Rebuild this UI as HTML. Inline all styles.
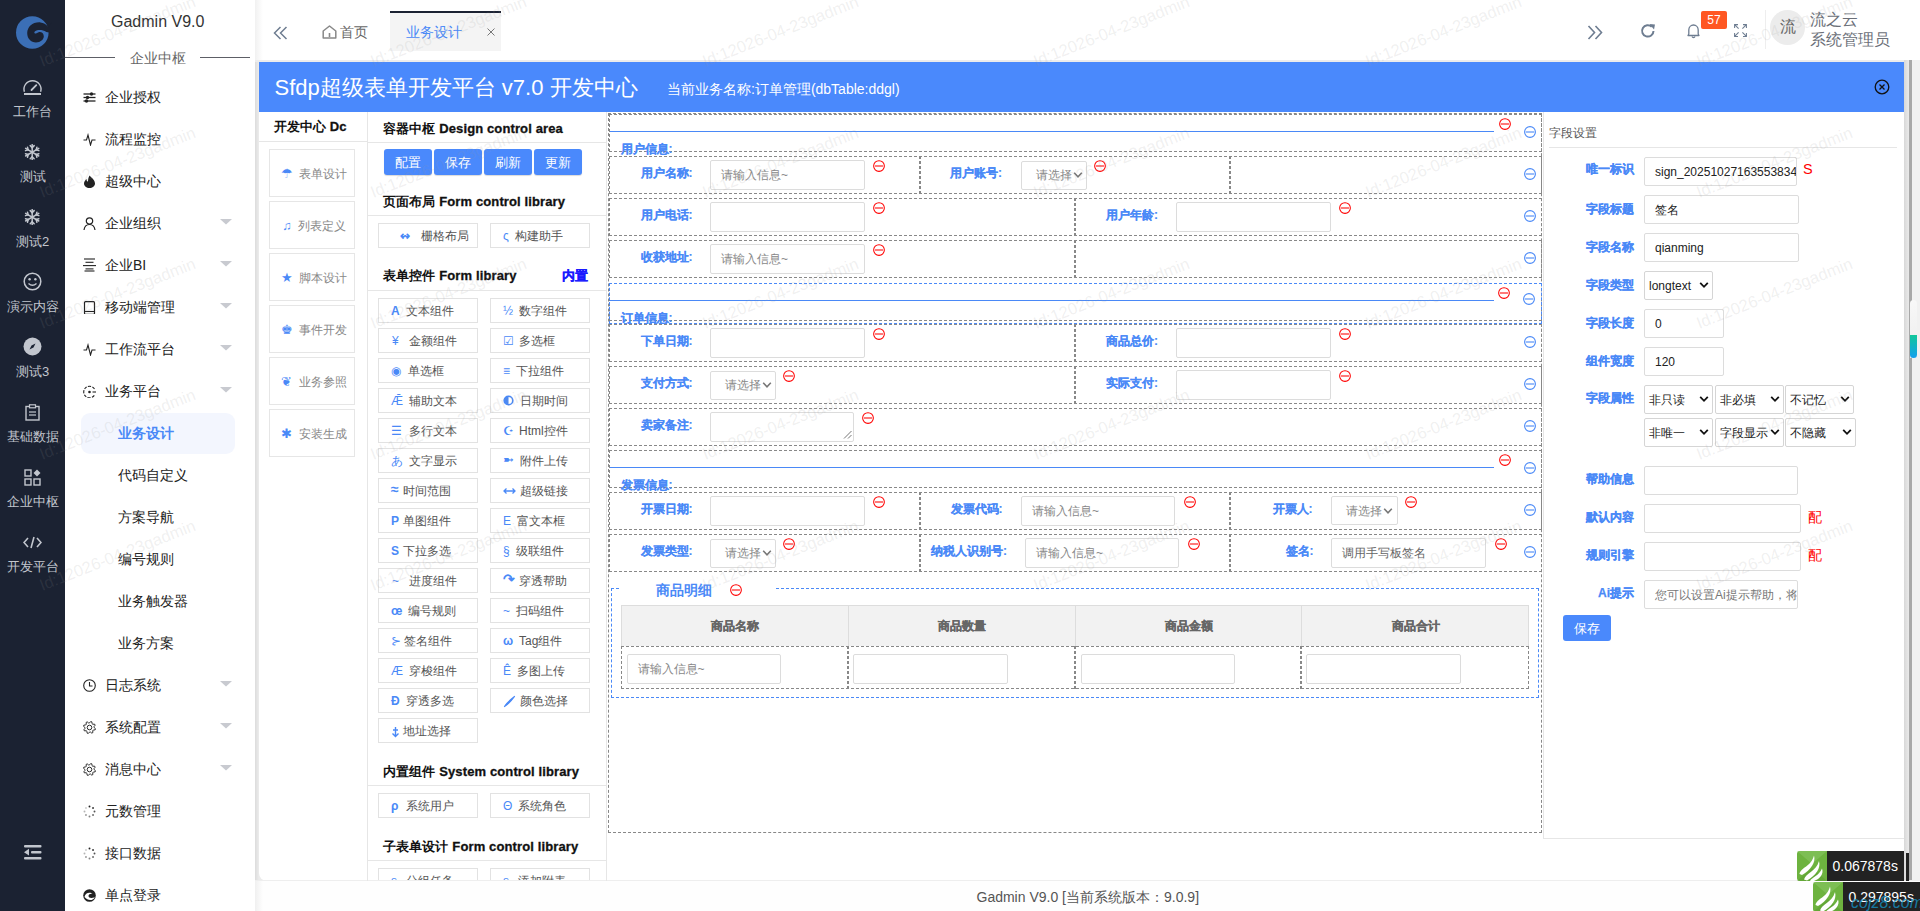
<!DOCTYPE html>
<html><head><meta charset="utf-8">
<style>
*{box-sizing:border-box;margin:0;padding:0}
html,body{width:1920px;height:911px;overflow:hidden;background:#fff;font-family:"Liberation Sans",sans-serif;color:#333}
.a{position:absolute}
.t{white-space:nowrap}
.bx{-webkit-text-stroke:0.25px currentColor}
.cb{position:absolute;width:100px;height:25px;border:1px solid #e2e2e2;background:#fff;font-size:12px;line-height:12px;color:#555;white-space:nowrap}
.cb i{font-style:normal;color:#4a89f7;position:absolute;top:6px}
.cb b{font-weight:normal;position:absolute;top:6px}
.inp{position:absolute;border:1px solid #dcdcdc;border-radius:2px;background:#fff}
.dh{position:absolute;border:1px dashed #888}
.vs{position:absolute;width:2px;border-left:1px dashed #888;border-right:1px dashed #888}
</style></head><body>

<div class="a" style="left:0px;top:0px;width:65px;height:911px;background:#1b2232"></div>
<svg class="a" style="left:0px;top:0px;" width="65" height="60" viewBox="0 0 65 60"><circle cx="32.3" cy="32.5" r="16.3" fill="#3b6fb6"/>
<path d="M48.6 27.2 C46 24 43.5 22.6 40.5 22.4 C33 21.8 27.4 26.5 27.2 33 C27.2 38.8 31 42.4 36 42.4 C40.5 42.4 43.8 39.5 43.8 36.2 C43.8 33.2 41.2 31.6 38.6 32.2 C37 32.6 36.4 33.8 35.2 33.6 C34.2 33.4 34 32 35 31.2 C37.5 29.6 42.5 29.5 46.3 32 L52 33 L52 22 Z" fill="#1b2232"/></svg>
<div class="a t" style="left:0;top:105px;width:65px;text-align:center;font-size:13px;line-height:13px;color:#c2c6ce">工作台</div>
<div class="a t" style="left:0;top:170px;width:65px;text-align:center;font-size:13px;line-height:13px;color:#c2c6ce">测试</div>
<div class="a t" style="left:0;top:235px;width:65px;text-align:center;font-size:13px;line-height:13px;color:#c2c6ce">测试2</div>
<div class="a t" style="left:0;top:300px;width:65px;text-align:center;font-size:13px;line-height:13px;color:#c2c6ce">演示内容</div>
<div class="a t" style="left:0;top:365px;width:65px;text-align:center;font-size:13px;line-height:13px;color:#c2c6ce">测试3</div>
<div class="a t" style="left:0;top:430px;width:65px;text-align:center;font-size:13px;line-height:13px;color:#c2c6ce">基础数据</div>
<div class="a t" style="left:0;top:495px;width:65px;text-align:center;font-size:13px;line-height:13px;color:#c2c6ce">企业中枢</div>
<div class="a t" style="left:0;top:560px;width:65px;text-align:center;font-size:13px;line-height:13px;color:#c2c6ce">开发平台</div>
<svg class="a" style="left:22px;top:78px;" width="21" height="19" viewBox="0 0 21 19"><path d="M2.38 13.7 A8.5 8.5 0 1 1 18.62 13.7" fill="none" stroke="#c2c6ce" stroke-width="1.4"/><rect x="2" y="15" width="17" height="2" fill="#c2c6ce"/><line x1="9.5" y1="12" x2="14.3" y2="7.2" stroke="#c2c6ce" stroke-width="1.8" stroke-linecap="round"/></svg>
<svg class="a" style="left:24.3px;top:144px;" width="16.4" height="16.4" viewBox="0 0 16.4 16.4"><g stroke="#c2c6ce" stroke-width="1.5" stroke-linecap="round"><line x1="8.20" y1="0.60" x2="8.20" y2="15.80"/><line x1="1.62" y1="4.40" x2="14.78" y2="12.00"/><line x1="1.62" y1="12.00" x2="14.78" y2="4.40"/><line x1="8.20" y1="3.60" x2="6.22" y2="1.62"/><line x1="8.20" y1="3.60" x2="10.18" y2="1.62"/><line x1="4.22" y1="5.90" x2="1.51" y2="6.62"/><line x1="4.22" y1="5.90" x2="3.49" y2="3.20"/><line x1="4.22" y1="10.50" x2="3.49" y2="13.20"/><line x1="4.22" y1="10.50" x2="1.51" y2="9.78"/><line x1="8.20" y1="12.80" x2="10.18" y2="14.78"/><line x1="8.20" y1="12.80" x2="6.22" y2="14.78"/><line x1="12.18" y1="10.50" x2="14.89" y2="9.78"/><line x1="12.18" y1="10.50" x2="12.91" y2="13.20"/><line x1="12.18" y1="5.90" x2="12.91" y2="3.20"/><line x1="12.18" y1="5.90" x2="14.89" y2="6.62"/></g></svg>
<svg class="a" style="left:24.3px;top:209px;" width="16.4" height="16.4" viewBox="0 0 16.4 16.4"><g stroke="#c2c6ce" stroke-width="1.5" stroke-linecap="round"><line x1="8.20" y1="0.60" x2="8.20" y2="15.80"/><line x1="1.62" y1="4.40" x2="14.78" y2="12.00"/><line x1="1.62" y1="12.00" x2="14.78" y2="4.40"/><line x1="8.20" y1="3.60" x2="6.22" y2="1.62"/><line x1="8.20" y1="3.60" x2="10.18" y2="1.62"/><line x1="4.22" y1="5.90" x2="1.51" y2="6.62"/><line x1="4.22" y1="5.90" x2="3.49" y2="3.20"/><line x1="4.22" y1="10.50" x2="3.49" y2="13.20"/><line x1="4.22" y1="10.50" x2="1.51" y2="9.78"/><line x1="8.20" y1="12.80" x2="10.18" y2="14.78"/><line x1="8.20" y1="12.80" x2="6.22" y2="14.78"/><line x1="12.18" y1="10.50" x2="14.89" y2="9.78"/><line x1="12.18" y1="10.50" x2="12.91" y2="13.20"/><line x1="12.18" y1="5.90" x2="12.91" y2="3.20"/><line x1="12.18" y1="5.90" x2="14.89" y2="6.62"/></g></svg>
<svg class="a" style="left:23px;top:272px;" width="19" height="19" viewBox="0 0 19 19"><circle cx="9.5" cy="9.5" r="8.3" fill="none" stroke="#c2c6ce" stroke-width="1.5"/><circle cx="6.6" cy="7.3" r="1.2" fill="#c2c6ce"/><circle cx="12.4" cy="7.3" r="1.2" fill="#c2c6ce"/><path d="M5.5 11.5 Q9.5 15 13.5 11.5" fill="none" stroke="#c2c6ce" stroke-width="1.4"/></svg>
<svg class="a" style="left:23px;top:337px;" width="19" height="19" viewBox="0 0 19 19"><circle cx="9.5" cy="9.5" r="9" fill="#c2c6ce"/><path d="M12.5 6.5 L10.5 10.5 L6.5 12.5 L8.5 8.5 Z" fill="#1b2232"/></svg>
<svg class="a" style="left:25px;top:404px;" width="15" height="17" viewBox="0 0 15 17"><rect x="1" y="2.5" width="13" height="13.5" fill="none" stroke="#c2c6ce" stroke-width="1.4"/><rect x="4.5" y="0.8" width="6" height="3" fill="#1b2232" stroke="#c2c6ce" stroke-width="1.2"/><line x1="4" y1="8" x2="11" y2="8" stroke="#c2c6ce" stroke-width="1.2"/><line x1="4" y1="11" x2="11" y2="11" stroke="#c2c6ce" stroke-width="1.2"/></svg>
<svg class="a" style="left:24px;top:469px;" width="17" height="17" viewBox="0 0 17 17"><rect x="1" y="1" width="6" height="6" fill="none" stroke="#c2c6ce" stroke-width="1.4"/><rect x="1" y="10" width="6" height="6" fill="none" stroke="#c2c6ce" stroke-width="1.4"/><rect x="10" y="10" width="6" height="6" fill="none" stroke="#c2c6ce" stroke-width="1.4"/><path d="M13 0.5 L16.5 4 L13 7.5 L9.5 4 Z" fill="#c2c6ce"/></svg>
<svg class="a" style="left:23px;top:536px;" width="19" height="13" viewBox="0 0 19 13"><path d="M5 2 L1 6.5 L5 11 M14 2 L18 6.5 L14 11 M11 1 L8 12" fill="none" stroke="#c2c6ce" stroke-width="1.6"/></svg>
<svg class="a" style="left:23px;top:843px;" width="19" height="18" viewBox="0 0 19 18"><g fill="#c2c6ce"><rect x="1" y="2" width="17.5" height="2.4" rx="1"/><rect x="1" y="14" width="17.5" height="2.4" rx="1"/><rect x="8" y="8" width="10.5" height="2.4" rx="1"/><path d="M1 9.2 L6 5.8 L6 12.6 Z"/></g></svg>
<div class="a" style="left:65px;top:0px;width:190px;height:911px;background:#fff"></div>
<div class="a t" style="left:111px;top:14px;font-size:16px;line-height:16px;color:#333;font-weight:normal;">Gadmin V9.0</div>
<div class="a" style="left:65px;top:57px;width:50px;height:1px;background:#5d5f66"></div>
<div class="a" style="left:200px;top:57px;width:50px;height:1px;background:#5d5f66"></div>
<div class="a t" style="left:130px;top:51px;font-size:14px;line-height:14px;color:#666;font-weight:normal;">企业中枢</div>
<div class="a" style="left:81px;top:413px;width:154px;height:41px;background:#f3f6fe;border-radius:9px"></div>
<div class="a t" style="left:105px;top:90px;font-size:14px;line-height:14px;color:#222;font-weight:normal;">企业授权</div>
<div class="a t" style="left:105px;top:132px;font-size:14px;line-height:14px;color:#222;font-weight:normal;">流程监控</div>
<div class="a t" style="left:105px;top:174px;font-size:14px;line-height:14px;color:#222;font-weight:normal;">超级中心</div>
<div class="a t" style="left:105px;top:216px;font-size:14px;line-height:14px;color:#222;font-weight:normal;">企业组织</div>
<svg class="a" style="left:220px;top:219px;" width="12" height="6" viewBox="0 0 12 6"><path d="M0 0 L12 0 L6 5.5 Z" fill="#c8cad0"/></svg>
<div class="a t" style="left:105px;top:258px;font-size:14px;line-height:14px;color:#222;font-weight:normal;">企业BI</div>
<svg class="a" style="left:220px;top:261px;" width="12" height="6" viewBox="0 0 12 6"><path d="M0 0 L12 0 L6 5.5 Z" fill="#c8cad0"/></svg>
<div class="a t" style="left:105px;top:300px;font-size:14px;line-height:14px;color:#222;font-weight:normal;">移动端管理</div>
<svg class="a" style="left:220px;top:303px;" width="12" height="6" viewBox="0 0 12 6"><path d="M0 0 L12 0 L6 5.5 Z" fill="#c8cad0"/></svg>
<div class="a t" style="left:105px;top:342px;font-size:14px;line-height:14px;color:#222;font-weight:normal;">工作流平台</div>
<svg class="a" style="left:220px;top:345px;" width="12" height="6" viewBox="0 0 12 6"><path d="M0 0 L12 0 L6 5.5 Z" fill="#c8cad0"/></svg>
<div class="a t" style="left:105px;top:384px;font-size:14px;line-height:14px;color:#222;font-weight:normal;">业务平台</div>
<svg class="a" style="left:220px;top:387px;" width="12" height="6" viewBox="0 0 12 6"><path d="M0 0 L12 0 L6 5.5 Z" fill="#c8cad0"/></svg>
<div class="a t" style="left:118px;top:426px;font-size:14px;line-height:14px;color:#4a89f7;font-weight:bold;">业务设计</div>
<div class="a t" style="left:118px;top:468px;font-size:14px;line-height:14px;color:#222;font-weight:normal;">代码自定义</div>
<div class="a t" style="left:118px;top:510px;font-size:14px;line-height:14px;color:#222;font-weight:normal;">方案导航</div>
<div class="a t" style="left:118px;top:552px;font-size:14px;line-height:14px;color:#222;font-weight:normal;">编号规则</div>
<div class="a t" style="left:118px;top:594px;font-size:14px;line-height:14px;color:#222;font-weight:normal;">业务触发器</div>
<div class="a t" style="left:118px;top:636px;font-size:14px;line-height:14px;color:#222;font-weight:normal;">业务方案</div>
<div class="a t" style="left:105px;top:678px;font-size:14px;line-height:14px;color:#222;font-weight:normal;">日志系统</div>
<svg class="a" style="left:220px;top:681px;" width="12" height="6" viewBox="0 0 12 6"><path d="M0 0 L12 0 L6 5.5 Z" fill="#c8cad0"/></svg>
<div class="a t" style="left:105px;top:720px;font-size:14px;line-height:14px;color:#222;font-weight:normal;">系统配置</div>
<svg class="a" style="left:220px;top:723px;" width="12" height="6" viewBox="0 0 12 6"><path d="M0 0 L12 0 L6 5.5 Z" fill="#c8cad0"/></svg>
<div class="a t" style="left:105px;top:762px;font-size:14px;line-height:14px;color:#222;font-weight:normal;">消息中心</div>
<svg class="a" style="left:220px;top:765px;" width="12" height="6" viewBox="0 0 12 6"><path d="M0 0 L12 0 L6 5.5 Z" fill="#c8cad0"/></svg>
<div class="a t" style="left:105px;top:804px;font-size:14px;line-height:14px;color:#222;font-weight:normal;">元数管理</div>
<div class="a t" style="left:105px;top:846px;font-size:14px;line-height:14px;color:#222;font-weight:normal;">接口数据</div>
<div class="a t" style="left:105px;top:888px;font-size:14px;line-height:14px;color:#222;font-weight:normal;">单点登录</div>
<svg class="a" style="left:83px;top:90.5px;" width="13" height="13" viewBox="0 0 13 13"><g stroke="#222" stroke-width="1.3"><line x1="0.5" y1="3" x2="12.5" y2="3"/><line x1="0.5" y1="6.5" x2="12.5" y2="6.5"/><line x1="0.5" y1="10" x2="12.5" y2="10"/></g><g fill="#222"><circle cx="8.5" cy="3" r="1.7"/><circle cx="4.5" cy="6.5" r="1.7"/><circle cx="3.5" cy="10" r="1.7"/></g></svg>
<svg class="a" style="left:83px;top:132.5px;" width="13" height="13" viewBox="0 0 13 13"><path d="M0.5 7 L3.5 7 L5 2 L7.5 12 L9 7 L12.5 7" fill="none" stroke="#222" stroke-width="1.1"/></svg>
<svg class="a" style="left:83px;top:174.5px;" width="13" height="13" viewBox="0 0 13 13"><path d="M6.5 0.5 C9 3 12 5.5 12 8.5 C12 11 9.5 13 6.5 13 C3.5 13 1 11 1 8.5 C1 6.5 2.5 5 3.5 4 C3.5 6 4.5 6.5 5 6.5 C5 4 5.5 2.5 6.5 0.5 Z" fill="#222"/></svg>
<svg class="a" style="left:83px;top:216.5px;" width="13" height="13" viewBox="0 0 13 13"><circle cx="6.5" cy="4" r="3.2" fill="none" stroke="#222" stroke-width="1.2"/><path d="M1 13 C1.5 9 4 7.5 6.5 7.5 C9 7.5 11.5 9 12 13" fill="none" stroke="#222" stroke-width="1.2"/></svg>
<svg class="a" style="left:83px;top:258.0px;" width="13" height="14" viewBox="0 0 13 14"><g stroke="#222" stroke-width="1.1"><line x1="1" y1="1" x2="12" y2="1"/><line x1="2.5" y1="4.3" x2="10.5" y2="4.3"/><line x1="0" y1="7.6" x2="13" y2="7.6"/><line x1="2.5" y1="10.9" x2="10.5" y2="10.9"/><line x1="1.5" y1="13" x2="11.5" y2="13"/></g></svg>
<svg class="a" style="left:83px;top:300.5px;" width="13" height="13" viewBox="0 0 13 13"><rect x="1.5" y="0.7" width="10" height="12.6" rx="1" fill="none" stroke="#222" stroke-width="1.2"/><line x1="1.5" y1="10.5" x2="11.5" y2="10.5" stroke="#222" stroke-width="1.1"/></svg>
<svg class="a" style="left:83px;top:342.5px;" width="13" height="13" viewBox="0 0 13 13"><path d="M0.5 7 L3.5 7 L5 2 L7.5 12 L9 7 L12.5 7" fill="none" stroke="#222" stroke-width="1.1"/></svg>
<svg class="a" style="left:83px;top:384.5px;" width="13" height="13" viewBox="0 0 13 13"><path d="M11.5 4 A5.8 5.8 0 1 0 11.5 10" fill="none" stroke="#222" stroke-width="1.1" stroke-dasharray="3 1.3"/><circle cx="6.5" cy="7" r="1.3" fill="#222"/><line x1="9.5" y1="7" x2="13" y2="7" stroke="#222" stroke-width="1.1"/></svg>
<svg class="a" style="left:83px;top:678.5px;" width="13" height="13" viewBox="0 0 13 13"><circle cx="6.5" cy="6.5" r="5.8" fill="none" stroke="#222" stroke-width="1.1"/><path d="M6.5 3 L6.5 7 L9.5 7" fill="none" stroke="#222" stroke-width="1.1"/></svg>
<svg class="a" style="left:83px;top:720.5px;" width="13" height="13" viewBox="0 0 13 13"><polygon points="12.48,7.71 12.13,8.85 10.32,9.07 9.74,9.76 9.87,11.58 8.81,12.14 7.38,11.01 6.48,11.10 5.29,12.48 4.15,12.13 3.93,10.32 3.24,9.74 1.42,9.87 0.86,8.81 1.99,7.38 1.90,6.48 0.52,5.29 0.87,4.15 2.68,3.93 3.26,3.24 3.13,1.42 4.19,0.86 5.62,1.99 6.52,1.90 7.71,0.52 8.85,0.87 9.07,2.68 9.76,3.26 11.58,3.13 12.14,4.19 11.01,5.62 11.10,6.52" fill="none" stroke="#222" stroke-width="0.95" stroke-linejoin="round"/><circle cx="6.5" cy="6.5" r="2.3" fill="none" stroke="#222" stroke-width="0.95"/></svg>
<svg class="a" style="left:83px;top:762.5px;" width="13" height="13" viewBox="0 0 13 13"><polygon points="12.48,7.71 12.13,8.85 10.32,9.07 9.74,9.76 9.87,11.58 8.81,12.14 7.38,11.01 6.48,11.10 5.29,12.48 4.15,12.13 3.93,10.32 3.24,9.74 1.42,9.87 0.86,8.81 1.99,7.38 1.90,6.48 0.52,5.29 0.87,4.15 2.68,3.93 3.26,3.24 3.13,1.42 4.19,0.86 5.62,1.99 6.52,1.90 7.71,0.52 8.85,0.87 9.07,2.68 9.76,3.26 11.58,3.13 12.14,4.19 11.01,5.62 11.10,6.52" fill="none" stroke="#222" stroke-width="0.95" stroke-linejoin="round"/><circle cx="6.5" cy="6.5" r="2.3" fill="none" stroke="#222" stroke-width="0.95"/></svg>
<svg class="a" style="left:83px;top:804.5px;" width="13" height="13" viewBox="0 0 13 13"><circle cx="6.50" cy="1.50" r="0.95" fill="#222" opacity="1.00"/><circle cx="10.04" cy="2.96" r="0.95" fill="#222" opacity="0.89"/><circle cx="11.50" cy="6.50" r="0.95" fill="#222" opacity="0.78"/><circle cx="10.04" cy="10.04" r="0.95" fill="#222" opacity="0.67"/><circle cx="6.50" cy="11.50" r="0.95" fill="#222" opacity="0.56"/><circle cx="2.96" cy="10.04" r="0.95" fill="#222" opacity="0.45"/><circle cx="1.50" cy="6.50" r="0.95" fill="#222" opacity="0.34"/><circle cx="2.96" cy="2.96" r="0.95" fill="#222" opacity="0.23"/></svg>
<svg class="a" style="left:83px;top:846.5px;" width="13" height="13" viewBox="0 0 13 13"><circle cx="6.50" cy="1.50" r="0.95" fill="#222" opacity="1.00"/><circle cx="10.04" cy="2.96" r="0.95" fill="#222" opacity="0.89"/><circle cx="11.50" cy="6.50" r="0.95" fill="#222" opacity="0.78"/><circle cx="10.04" cy="10.04" r="0.95" fill="#222" opacity="0.67"/><circle cx="6.50" cy="11.50" r="0.95" fill="#222" opacity="0.56"/><circle cx="2.96" cy="10.04" r="0.95" fill="#222" opacity="0.45"/><circle cx="1.50" cy="6.50" r="0.95" fill="#222" opacity="0.34"/><circle cx="2.96" cy="2.96" r="0.95" fill="#222" opacity="0.23"/></svg>
<svg class="a" style="left:83px;top:888.5px;" width="13" height="13" viewBox="0 0 13 13"><circle cx="6.5" cy="6.5" r="6.3" fill="#222"/><path d="M1.5 8 C2 3.5 7.5 2.5 9.5 5 C8 4.5 5.5 5 5.5 7 C5.5 9 8.5 9.5 11.8 8.2 C10.5 11.5 5 12.5 1.5 8 Z" fill="#fff"/></svg>
<div class="a" style="left:255px;top:0px;width:1665px;height:60px;background:#fff"></div>
<div class="a" style="left:255px;top:0px;width:8px;height:60px;background:linear-gradient(to right,#f1f1f1,#fff)"></div>
<svg class="a" style="left:273px;top:26px;" width="15" height="14" viewBox="0 0 15 14"><path d="M7.5 1 L1.5 7 L7.5 13 M13.5 1 L7.5 7 L13.5 13" fill="none" stroke="#6e7d91" stroke-width="1.5"/></svg>
<svg class="a" style="left:322px;top:25px;" width="15" height="14" viewBox="0 0 15 14"><path d="M1.2 13 L1.2 6 L7.5 1 L13.8 6 L13.8 13 Z" fill="none" stroke="#888" stroke-width="1.5" stroke-linejoin="round"/><line x1="7.5" y1="8" x2="7.5" y2="12" stroke="#888" stroke-width="1.6"/></svg>
<div class="a t" style="left:340px;top:25px;font-size:14px;line-height:14px;color:#666;font-weight:normal;">首页</div>
<div class="a" style="left:390px;top:11px;width:111px;height:40px;background:#f4f4f4"></div>
<div class="a" style="left:390px;top:10.5px;width:111px;height:2px;background:#1b2232"></div>
<div class="a t" style="left:405.5px;top:25px;font-size:14px;line-height:14px;color:#4a89f7;font-weight:normal;">业务设计</div>
<svg class="a" style="left:486.5px;top:27.5px;" width="8" height="8" viewBox="0 0 8 8"><path d="M0.5 0.5 L7.5 7.5 M7.5 0.5 L0.5 7.5" stroke="#777" stroke-width="1"/></svg>
<svg class="a" style="left:1587px;top:25px;" width="16" height="15" viewBox="0 0 16 15"><path d="M1.5 1 L7.5 7.5 L1.5 14 M8.5 1 L14.5 7.5 L8.5 14" fill="none" stroke="#6e7d91" stroke-width="1.6"/></svg>
<svg class="a" style="left:1640px;top:23px;" width="16" height="16" viewBox="0 0 16 16"><path d="M13.5 8 A5.7 5.7 0 1 1 11.8 3.8" fill="none" stroke="#6e7d91" stroke-width="2"/><path d="M9.5 1 L15 1.5 L14 6.5 Z" fill="#6e7d91"/></svg>
<svg class="a" style="left:1686px;top:23px;" width="16" height="16" viewBox="0 0 16 16"><path d="M2 12.5 L2.8 11 L2.8 7 C2.8 4 5 2 7.5 2 C10 2 12.2 4 12.2 7 L12.2 11 L13 12.5 Z" fill="none" stroke="#6e7d91" stroke-width="1.3" stroke-linejoin="round"/><path d="M6 13.5 A1.6 1.6 0 0 0 9 13.5" fill="none" stroke="#6e7d91" stroke-width="1.3"/></svg>
<div class="a" style="left:1701px;top:11px;width:26px;height:18px;background:#ff5722;border-radius:2px"></div>
<div class="a t" style="left:1701px;top:14px;font-size:12px;line-height:12px;color:#fff;font-weight:normal;width:26px;text-align:center;line-height:12px">57</div>
<svg class="a" style="left:1733.5px;top:24px;" width="13" height="13" viewBox="0 0 13 13"><g fill="none" stroke="#6e7d91" stroke-width="1.05"><path d="M0.6 4 L0.6 0.6 L4 0.6 M0.6 0.6 L4.6 4.6"/><path d="M12.4 4 L12.4 0.6 L9 0.6 M12.4 0.6 L8.4 4.6"/><path d="M0.6 9 L0.6 12.4 L4 12.4 M0.6 12.4 L4.6 8.4"/><path d="M12.4 9 L12.4 12.4 L9 12.4 M12.4 12.4 L8.4 8.4"/></g></svg>
<div class="a" style="left:1765px;top:10px;width:1px;height:39px;background:#eee"></div>
<div class="a" style="left:1770px;top:10px;width:35px;height:35px;background:#ececec;border-radius:50%"></div>
<div class="a t" style="left:1779.5px;top:19px;font-size:16px;line-height:16px;color:#666;font-weight:normal;">流</div>
<div class="a t" style="left:1810px;top:12px;font-size:16px;line-height:16px;color:#6b6f78;font-weight:normal;">流之云</div>
<div class="a t" style="left:1810px;top:32px;font-size:16px;line-height:16px;color:#6b6f78;font-weight:normal;">系统管理员</div>
<div class="a" style="left:255px;top:60px;width:1650px;height:821px;background:linear-gradient(to right,#dcdcdc,#ececec 4px,#f0f0f0)"></div>
<div class="a" style="left:255px;top:60px;width:1650px;height:2px;background:#ececec"></div>
<div class="a" style="left:259px;top:62px;width:1645px;height:819px;background:#fff;border-bottom-left-radius:8px"></div>
<div class="a" style="left:259px;top:62px;width:1645px;height:50px;background:#4a89fc"></div>
<div class="a t" style="left:274.5px;top:77px;font-size:22px;line-height:22px;color:#fff;font-weight:normal;">Sfdp超级表单开发平台 v7.0 开发中心</div>
<div class="a t" style="left:667px;top:82px;font-size:14px;line-height:14px;color:#fff;font-weight:normal;">当前业务名称:订单管理(dbTable:ddgl)</div>
<svg class="a" style="left:1874px;top:79px;" width="16" height="16" viewBox="0 0 16 16"><circle cx="8" cy="8" r="6.8" fill="none" stroke="#111" stroke-width="1.3"/><path d="M5.5 5.5 L10.5 10.5 M10.5 5.5 L5.5 10.5" stroke="#111" stroke-width="1.3"/></svg>
<div class="a" style="left:1904px;top:60px;width:5px;height:821px;background:linear-gradient(to right,#d8d8d8,#eaeaea)"></div>
<div class="a" style="left:1909px;top:60px;width:3px;height:821px;background:#a8a8a8"></div>
<div class="a" style="left:1912px;top:60px;width:8px;height:851px;background:#f1f1f1"></div>
<div class="a" style="left:1910px;top:300px;width:7px;height:58px;background:linear-gradient(#f8f8f8,#ececec);border-radius:4px 4px 0 0"></div>
<div class="a" style="left:1910px;top:335px;width:7px;height:23px;background:linear-gradient(#12c79a,#14a0ee);border-radius:0 0 4px 4px"></div>
<div class="a" style="left:255px;top:881px;width:1665px;height:30px;background:#fefefe"></div>
<div class="a" style="left:255px;top:881px;width:8px;height:30px;background:linear-gradient(to right,#f0f0f0,#fefefe)"></div>
<div class="a" style="left:255px;top:880px;width:1665px;height:1px;background:#eeeeee"></div>
<div class="a t" style="left:976.5px;top:890px;font-size:14px;line-height:14px;color:#555;font-weight:normal;">Gadmin V9.0 [当前系统版本：9.0.9]</div>
<div class="a t" style="left:273.5px;top:120px;font-size:13px;line-height:13px;color:#111;font-weight:bold;letter-spacing:0.12px">开发中心<span style="-webkit-text-stroke:0.3px currentColor"> Dc</span></div>
<div class="a" style="left:259px;top:141px;width:108px;height:1px;background:#e6e6e6"></div>
<div class="a" style="left:367px;top:112px;width:1px;height:769px;background:#e6e6e6"></div>
<div class="a" style="left:269px;top:149px;width:86px;height:48px;border:1px solid #e6e6e6;background:#fff"></div>
<div class="a" style="left:269px;top:201px;width:86px;height:48px;border:1px solid #e6e6e6;background:#fff"></div>
<div class="a" style="left:269px;top:253px;width:86px;height:48px;border:1px solid #e6e6e6;background:#fff"></div>
<div class="a" style="left:269px;top:305px;width:86px;height:48px;border:1px solid #e6e6e6;background:#fff"></div>
<div class="a" style="left:269px;top:357px;width:86px;height:48px;border:1px solid #e6e6e6;background:#fff"></div>
<div class="a" style="left:269px;top:409px;width:86px;height:48px;border:1px solid #e6e6e6;background:#fff"></div>
<div class="a t" style="left:271px;top:168px;width:86px;text-align:center;font-size:12px;line-height:12px;color:#888"><span style="color:#4a89f7;font-size:12.5px;margin-right:3px">&#9730;</span> 表单设计</div>
<div class="a t" style="left:271px;top:220px;width:86px;text-align:center;font-size:12px;line-height:12px;color:#888"><span style="color:#4a89f7;font-size:12.5px;margin-right:3px">&#9835;</span> 列表定义</div>
<div class="a t" style="left:271px;top:272px;width:86px;text-align:center;font-size:12px;line-height:12px;color:#888"><span style="color:#4a89f7;font-size:12.5px;margin-right:3px">&#9733;</span> 脚本设计</div>
<div class="a t" style="left:271px;top:324px;width:86px;text-align:center;font-size:12px;line-height:12px;color:#888"><span style="color:#4a89f7;font-size:12.5px;margin-right:3px">&#9818;</span> 事件开发</div>
<div class="a t" style="left:271px;top:376px;width:86px;text-align:center;font-size:12px;line-height:12px;color:#888"><span style="color:#4a89f7;font-size:12.5px;margin-right:3px">&#10086;</span> 业务参照</div>
<div class="a t" style="left:271px;top:428px;width:86px;text-align:center;font-size:12px;line-height:12px;color:#888"><span style="color:#4a89f7;font-size:12.5px;margin-right:3px">&#10033;</span> 安装生成</div>
<div class="a" style="left:606px;top:112px;width:1px;height:769px;background:#e6e6e6"></div>
<div class="a t" style="left:383px;top:122px;font-size:13px;line-height:13px;color:#111;font-weight:bold;letter-spacing:0.12px">容器中枢<span style="-webkit-text-stroke:0.3px currentColor"> Design control area</span></div>
<div class="a" style="left:368px;top:142px;width:238px;height:1px;background:#e6e6e6"></div>
<div class="a t" style="left:384px;top:149px;width:48px;height:26px;background:#4a89fc;border-radius:3px;color:#fff;font-size:13px;line-height:13px;padding-top:6.5px;text-align:center;box-shadow:0 1px 1px rgba(0,0,0,.15)">配置</div>
<div class="a t" style="left:434px;top:149px;width:48px;height:26px;background:#4a89fc;border-radius:3px;color:#fff;font-size:13px;line-height:13px;padding-top:6.5px;text-align:center;box-shadow:0 1px 1px rgba(0,0,0,.15)">保存</div>
<div class="a t" style="left:484px;top:149px;width:48px;height:26px;background:#4a89fc;border-radius:3px;color:#fff;font-size:13px;line-height:13px;padding-top:6.5px;text-align:center;box-shadow:0 1px 1px rgba(0,0,0,.15)">刷新</div>
<div class="a t" style="left:534px;top:149px;width:48px;height:26px;background:#4a89fc;border-radius:3px;color:#fff;font-size:13px;line-height:13px;padding-top:6.5px;text-align:center;box-shadow:0 1px 1px rgba(0,0,0,.15)">更新</div>
<div class="a t" style="left:383px;top:195px;font-size:13px;line-height:13px;color:#111;font-weight:bold;letter-spacing:0.12px">页面布局<span style="-webkit-text-stroke:0.3px currentColor"> Form control library</span></div>
<div class="a" style="left:368px;top:215px;width:238px;height:1px;background:#e6e6e6"></div>
<div class="cb" style="left:378px;top:223px"><i style="left:21px;font-weight:bold">&#8621;</i><b style="left:42px">栅格布局</b></div>
<div class="cb" style="left:490px;top:223px"><i style="left:12px;">&#962;</i><b style="left:24px">构建助手</b></div>
<div class="a t" style="left:383px;top:269px;font-size:13px;line-height:13px;color:#111;font-weight:bold;letter-spacing:0.12px">表单控件<span style="-webkit-text-stroke:0.3px currentColor"> Form library</span></div>
<div class="a t" style="left:562px;top:269px;font-size:13px;line-height:13px;color:#1a1aff;font-weight:bold;-webkit-text-stroke:0.25px currentColor">内置</div>
<div class="a" style="left:368px;top:290px;width:238px;height:1px;background:#e6e6e6"></div>
<div class="cb" style="left:378px;top:298px"><i style="left:12px;font-weight:bold">A</i><b style="left:27px">文本组件</b></div>
<div class="cb" style="left:490px;top:298px"><i style="left:12px;">&#189;</i><b style="left:28px">数字组件</b></div>
<div class="cb" style="left:378px;top:328px"><i style="left:13px;">&#165;</i><b style="left:30px">金额组件</b></div>
<div class="cb" style="left:490px;top:328px"><i style="left:12px;">&#9745;</i><b style="left:28px">多选框</b></div>
<div class="cb" style="left:378px;top:358px"><i style="left:12px;">&#9673;</i><b style="left:29px">单选框</b></div>
<div class="cb" style="left:490px;top:358px"><i style="left:12px;">&#8801;</i><b style="left:25px">下拉组件</b></div>
<div class="cb" style="left:378px;top:388px"><i style="left:12px;">&#482;</i><b style="left:30px">辅助文本</b></div>
<div class="cb" style="left:490px;top:388px"><i style="left:12px;top:6px;line-height:0"><svg width="11" height="11" viewBox="0 0 11 11"><circle cx="5.5" cy="5.5" r="4.3" fill="none" stroke="#4a89f7" stroke-width="1.6"/><path d="M5.5 1.2 A4.3 4.3 0 0 0 5.5 9.8 Z" fill="#4a89f7"/></svg></i><b style="left:29px">日期时间</b></div>
<div class="cb" style="left:378px;top:418px"><i style="left:12px;">&#9776;</i><b style="left:30px">多行文本</b></div>
<div class="cb" style="left:490px;top:418px"><i style="left:12px;">&#9770;</i><b style="left:28px">Html控件</b></div>
<div class="cb" style="left:378px;top:448px"><i style="left:12px;">&#12354;</i><b style="left:30px">文字显示</b></div>
<div class="cb" style="left:490px;top:448px"><i style="left:12px;font-size:13px;top:5px">&#10172;</i><b style="left:29px">附件上传</b></div>
<div class="cb" style="left:378px;top:478px"><i style="left:12px;font-size:14px;top:4px;font-weight:bold">&#8776;</i><b style="left:24px">时间范围</b></div>
<div class="cb" style="left:490px;top:478px"><i style="left:12px;top:8px;line-height:0"><svg width="13" height="8" viewBox="0 0 13 8"><path d="M1 4 L12 4 M3.5 1.5 L1 4 L3.5 6.5 M9.5 1.5 L12 4 L9.5 6.5" fill="none" stroke="#4a89f7" stroke-width="1.3"/></svg></i><b style="left:29px">超级链接</b></div>
<div class="cb" style="left:378px;top:508px"><i style="left:12px;font-weight:bold">P</i><b style="left:24px">单图组件</b></div>
<div class="cb" style="left:490px;top:508px"><i style="left:12px;">E</i><b style="left:26px">富文本框</b></div>
<div class="cb" style="left:378px;top:538px"><i style="left:12px;font-weight:bold">S</i><b style="left:24px">下拉多选</b></div>
<div class="cb" style="left:490px;top:538px"><i style="left:12px;">&#167;</i><b style="left:25px">级联组件</b></div>
<div class="cb" style="left:378px;top:568px"><i style="left:13px;">~</i><b style="left:30px">进度组件</b></div>
<div class="cb" style="left:490px;top:568px"><i style="left:12px;font-size:14px;top:4px;font-weight:bold">&#8631;</i><b style="left:28px">穿透帮助</b></div>
<div class="cb" style="left:378px;top:598px"><i style="left:12px;font-weight:bold">&#339;</i><b style="left:29px">编号规则</b></div>
<div class="cb" style="left:490px;top:598px"><i style="left:12px;">~</i><b style="left:25px">扫码组件</b></div>
<div class="cb" style="left:378px;top:628px"><i style="left:12px;">&#8881;</i><b style="left:25px">签名组件</b></div>
<div class="cb" style="left:490px;top:628px"><i style="left:12px;font-weight:bold">&#969;</i><b style="left:28px">Tag组件</b></div>
<div class="cb" style="left:378px;top:658px"><i style="left:12px;">&#198;</i><b style="left:30px">穿梭组件</b></div>
<div class="cb" style="left:490px;top:658px"><i style="left:12px;">&#202;</i><b style="left:26px">多图上传</b></div>
<div class="cb" style="left:378px;top:688px"><i style="left:12px;font-weight:bold">&#272;</i><b style="left:27px">穿透多选</b></div>
<div class="cb" style="left:490px;top:688px"><i style="left:12px;top:6px;line-height:0"><svg width="13" height="13" viewBox="0 0 13 13"><path d="M1.5 11.5 C3 9 7 5 11.5 1.5 C9 5 5.5 9 1.5 11.5 Z" fill="#4a89f7" stroke="#4a89f7" stroke-width="1.2" stroke-linejoin="round"/></svg></i><b style="left:29px">颜色选择</b></div>
<div class="cb" style="left:378px;top:718px"><i style="left:12px;top:7px;line-height:0"><svg width="9" height="12" viewBox="0 0 9 12"><path d="M4.5 1 L4.5 10.5 M1.5 7.5 L4.5 10.5 L7.5 7.5 M2 4 L7 4" fill="none" stroke="#4a89f7" stroke-width="1.4"/></svg></i><b style="left:24px">地址选择</b></div>
<div class="a t" style="left:383px;top:765px;font-size:13px;line-height:13px;color:#111;font-weight:bold;letter-spacing:0.12px">内置组件<span style="-webkit-text-stroke:0.3px currentColor"> System control library</span></div>
<div class="a" style="left:368px;top:785px;width:238px;height:1px;background:#e6e6e6"></div>
<div class="cb" style="left:378px;top:793px"><i style="left:12px;font-weight:bold">&#961;</i><b style="left:27px">系统用户</b></div>
<div class="cb" style="left:490px;top:793px"><i style="left:12px;">&#920;</i><b style="left:27px">系统角色</b></div>
<div class="a t" style="left:383px;top:840px;font-size:13px;line-height:13px;color:#111;font-weight:bold;letter-spacing:0.12px">子表单设计<span style="-webkit-text-stroke:0.3px currentColor"> Form control library</span></div>
<div class="a" style="left:368px;top:860px;width:238px;height:1px;background:#e6e6e6"></div>
<div class="a" style="left:368px;top:861px;width:238px;height:19px;overflow:hidden">
<div class="cb" style="left:10px;top:7px"><i style="left:12px">&#642;</i><b style="left:27px">分组任务</b></div>
<div class="cb" style="left:122px;top:7px"><i style="left:12px">&#642;</i><b style="left:27px">添加附表</b></div>
</div>
<div class="a" style="left:608px;top:113px;width:934px;height:720px;border:1px dashed #888"></div>
<div class="a" style="left:609px;top:114px;width:933px;height:38px;border:1px dashed #888"></div>
<div class="a" style="left:610px;top:131px;width:884px;height:1px;background:#4a89f7"></div>
<div class="a t" style="left:620.5px;top:143px;font-size:12px;line-height:12px;color:#4a89f7;font-weight:bold;-webkit-text-stroke:0.12px currentColor">用户信息:</div>
<svg class="a" style="left:1498.5px;top:118px;" width="12" height="12" viewBox="0 0 12 12"><circle cx="6" cy="6" r="5.35" fill="none" stroke="#f00" stroke-width="1.05"/><line x1="2" y1="6" x2="10" y2="6" stroke="#f00" stroke-width="1.05"/></svg>
<svg class="a" style="left:1524px;top:126px;" width="12" height="12" viewBox="0 0 12 12"><circle cx="6" cy="6" r="5.4" fill="none" stroke="#4a89f7" stroke-width="1.1"/><line x1="1.8" y1="6" x2="10.2" y2="6" stroke="#4a89f7" stroke-width="1.1"/></svg>
<div class="a" style="left:609px;top:156px;width:933px;height:38px;border:1px dashed #888"></div>
<svg class="a" style="left:1524px;top:168px;" width="12" height="12" viewBox="0 0 12 12"><circle cx="6" cy="6" r="5.4" fill="none" stroke="#4a89f7" stroke-width="1.1"/><line x1="1.8" y1="6" x2="10.2" y2="6" stroke="#4a89f7" stroke-width="1.1"/></svg>
<div class="a t" style="left:640.5px;top:167px;font-size:12px;line-height:12px;color:#4a89f7;font-weight:bold;-webkit-text-stroke:0.12px currentColor">用户名称:</div>
<div class="inp" style="left:710px;top:160px;width:155px;height:30px"></div>
<div class="a t" style="left:721px;top:169px;font-size:12px;line-height:12px;color:#888;font-weight:normal;">请输入信息~</div>
<svg class="a" style="left:873px;top:160px;" width="12" height="12" viewBox="0 0 12 12"><circle cx="6" cy="6" r="5.35" fill="none" stroke="#f00" stroke-width="1.05"/><line x1="2" y1="6" x2="10" y2="6" stroke="#f00" stroke-width="1.05"/></svg>
<div class="vs" style="left:919px;top:156px;height:38px"></div>
<div class="a t" style="left:950px;top:167px;font-size:12px;line-height:12px;color:#4a89f7;font-weight:bold;-webkit-text-stroke:0.12px currentColor">用户账号:</div>
<div class="inp" style="left:1021px;top:160.5px;width:66px;height:29px"></div>
<div class="a t" style="left:1035.5px;top:169.0px;font-size:12px;line-height:12px;color:#888;font-weight:normal;">请选择</div>
<svg class="a" style="left:1073px;top:171.0px;" width="10" height="8" viewBox="0 0 10 8"><path d="M1.2 1.8 L5 5.8 L8.8 1.8" fill="none" stroke="#777" stroke-width="1.6"/></svg>
<svg class="a" style="left:1094px;top:160px;" width="12" height="12" viewBox="0 0 12 12"><circle cx="6" cy="6" r="5.35" fill="none" stroke="#f00" stroke-width="1.05"/><line x1="2" y1="6" x2="10" y2="6" stroke="#f00" stroke-width="1.05"/></svg>
<div class="vs" style="left:1229px;top:156px;height:38px"></div>
<div class="a" style="left:609px;top:198px;width:933px;height:38px;border:1px dashed #888"></div>
<svg class="a" style="left:1524px;top:210px;" width="12" height="12" viewBox="0 0 12 12"><circle cx="6" cy="6" r="5.4" fill="none" stroke="#4a89f7" stroke-width="1.1"/><line x1="1.8" y1="6" x2="10.2" y2="6" stroke="#4a89f7" stroke-width="1.1"/></svg>
<div class="a t" style="left:640.5px;top:209px;font-size:12px;line-height:12px;color:#4a89f7;font-weight:bold;-webkit-text-stroke:0.12px currentColor">用户电话:</div>
<div class="inp" style="left:710px;top:202px;width:155px;height:30px"></div>
<svg class="a" style="left:873px;top:202px;" width="12" height="12" viewBox="0 0 12 12"><circle cx="6" cy="6" r="5.35" fill="none" stroke="#f00" stroke-width="1.05"/><line x1="2" y1="6" x2="10" y2="6" stroke="#f00" stroke-width="1.05"/></svg>
<div class="vs" style="left:1074px;top:198px;height:38px"></div>
<div class="a t" style="left:1106px;top:209px;font-size:12px;line-height:12px;color:#4a89f7;font-weight:bold;-webkit-text-stroke:0.12px currentColor">用户年龄:</div>
<div class="inp" style="left:1176px;top:202px;width:155px;height:30px"></div>
<svg class="a" style="left:1339px;top:202px;" width="12" height="12" viewBox="0 0 12 12"><circle cx="6" cy="6" r="5.35" fill="none" stroke="#f00" stroke-width="1.05"/><line x1="2" y1="6" x2="10" y2="6" stroke="#f00" stroke-width="1.05"/></svg>
<div class="a" style="left:609px;top:240px;width:933px;height:38px;border:1px dashed #888"></div>
<svg class="a" style="left:1524px;top:252px;" width="12" height="12" viewBox="0 0 12 12"><circle cx="6" cy="6" r="5.4" fill="none" stroke="#4a89f7" stroke-width="1.1"/><line x1="1.8" y1="6" x2="10.2" y2="6" stroke="#4a89f7" stroke-width="1.1"/></svg>
<div class="a t" style="left:640.5px;top:251px;font-size:12px;line-height:12px;color:#4a89f7;font-weight:bold;-webkit-text-stroke:0.12px currentColor">收获地址:</div>
<div class="inp" style="left:710px;top:244px;width:155px;height:30px"></div>
<div class="a t" style="left:721px;top:253px;font-size:12px;line-height:12px;color:#888;font-weight:normal;">请输入信息~</div>
<svg class="a" style="left:873px;top:244px;" width="12" height="12" viewBox="0 0 12 12"><circle cx="6" cy="6" r="5.35" fill="none" stroke="#f00" stroke-width="1.05"/><line x1="2" y1="6" x2="10" y2="6" stroke="#f00" stroke-width="1.05"/></svg>
<div class="vs" style="left:1074px;top:240px;height:38px"></div>
<div class="a" style="left:609px;top:283px;width:933px;height:38px;border:1px dashed #888"></div>
<div class="a" style="left:609px;top:283px;width:933px;height:41px;border:1px dashed #4a89f7"></div>
<div class="a" style="left:610px;top:300px;width:884px;height:1px;background:#4a89f7"></div>
<div class="a t" style="left:620.5px;top:312px;font-size:12px;line-height:12px;color:#4a89f7;font-weight:bold;-webkit-text-stroke:0.12px currentColor">订单信息:</div>
<svg class="a" style="left:1498px;top:286.5px;" width="12" height="12" viewBox="0 0 12 12"><circle cx="6" cy="6" r="5.35" fill="none" stroke="#f00" stroke-width="1.05"/><line x1="2" y1="6" x2="10" y2="6" stroke="#f00" stroke-width="1.05"/></svg>
<svg class="a" style="left:1523px;top:293px;" width="12" height="12" viewBox="0 0 12 12"><circle cx="6" cy="6" r="5.4" fill="none" stroke="#4a89f7" stroke-width="1.1"/><line x1="1.8" y1="6" x2="10.2" y2="6" stroke="#4a89f7" stroke-width="1.1"/></svg>
<div class="a" style="left:609px;top:324px;width:933px;height:38px;border:1px dashed #888"></div>
<svg class="a" style="left:1524px;top:336px;" width="12" height="12" viewBox="0 0 12 12"><circle cx="6" cy="6" r="5.4" fill="none" stroke="#4a89f7" stroke-width="1.1"/><line x1="1.8" y1="6" x2="10.2" y2="6" stroke="#4a89f7" stroke-width="1.1"/></svg>
<div class="a t" style="left:640.5px;top:335px;font-size:12px;line-height:12px;color:#4a89f7;font-weight:bold;-webkit-text-stroke:0.12px currentColor">下单日期:</div>
<div class="inp" style="left:710px;top:328px;width:155px;height:30px"></div>
<svg class="a" style="left:873px;top:328px;" width="12" height="12" viewBox="0 0 12 12"><circle cx="6" cy="6" r="5.35" fill="none" stroke="#f00" stroke-width="1.05"/><line x1="2" y1="6" x2="10" y2="6" stroke="#f00" stroke-width="1.05"/></svg>
<div class="vs" style="left:1074px;top:324px;height:38px"></div>
<div class="a t" style="left:1106px;top:335px;font-size:12px;line-height:12px;color:#4a89f7;font-weight:bold;-webkit-text-stroke:0.12px currentColor">商品总价:</div>
<div class="inp" style="left:1176px;top:328px;width:155px;height:30px"></div>
<svg class="a" style="left:1339px;top:328px;" width="12" height="12" viewBox="0 0 12 12"><circle cx="6" cy="6" r="5.35" fill="none" stroke="#f00" stroke-width="1.05"/><line x1="2" y1="6" x2="10" y2="6" stroke="#f00" stroke-width="1.05"/></svg>
<div class="a" style="left:609px;top:366px;width:933px;height:38px;border:1px dashed #888"></div>
<svg class="a" style="left:1524px;top:378px;" width="12" height="12" viewBox="0 0 12 12"><circle cx="6" cy="6" r="5.4" fill="none" stroke="#4a89f7" stroke-width="1.1"/><line x1="1.8" y1="6" x2="10.2" y2="6" stroke="#4a89f7" stroke-width="1.1"/></svg>
<div class="a t" style="left:640.5px;top:377px;font-size:12px;line-height:12px;color:#4a89f7;font-weight:bold;-webkit-text-stroke:0.12px currentColor">支付方式:</div>
<div class="inp" style="left:710px;top:370.5px;width:66px;height:29px"></div>
<div class="a t" style="left:724.5px;top:379.0px;font-size:12px;line-height:12px;color:#888;font-weight:normal;">请选择</div>
<svg class="a" style="left:762px;top:381.0px;" width="10" height="8" viewBox="0 0 10 8"><path d="M1.2 1.8 L5 5.8 L8.8 1.8" fill="none" stroke="#777" stroke-width="1.6"/></svg>
<svg class="a" style="left:783px;top:370px;" width="12" height="12" viewBox="0 0 12 12"><circle cx="6" cy="6" r="5.35" fill="none" stroke="#f00" stroke-width="1.05"/><line x1="2" y1="6" x2="10" y2="6" stroke="#f00" stroke-width="1.05"/></svg>
<div class="vs" style="left:1074px;top:366px;height:38px"></div>
<div class="a t" style="left:1106px;top:377px;font-size:12px;line-height:12px;color:#4a89f7;font-weight:bold;-webkit-text-stroke:0.12px currentColor">实际支付:</div>
<div class="inp" style="left:1176px;top:370px;width:155px;height:30px"></div>
<svg class="a" style="left:1339px;top:370px;" width="12" height="12" viewBox="0 0 12 12"><circle cx="6" cy="6" r="5.35" fill="none" stroke="#f00" stroke-width="1.05"/><line x1="2" y1="6" x2="10" y2="6" stroke="#f00" stroke-width="1.05"/></svg>
<div class="a" style="left:609px;top:408px;width:933px;height:38px;border:1px dashed #888"></div>
<svg class="a" style="left:1524px;top:420px;" width="12" height="12" viewBox="0 0 12 12"><circle cx="6" cy="6" r="5.4" fill="none" stroke="#4a89f7" stroke-width="1.1"/><line x1="1.8" y1="6" x2="10.2" y2="6" stroke="#4a89f7" stroke-width="1.1"/></svg>
<div class="a t" style="left:640.5px;top:419px;font-size:12px;line-height:12px;color:#4a89f7;font-weight:bold;-webkit-text-stroke:0.12px currentColor">卖家备注:</div>
<div class="inp" style="left:710px;top:412px;width:144px;height:30px"></div>
<svg class="a" style="left:861.5px;top:412px;" width="12" height="12" viewBox="0 0 12 12"><circle cx="6" cy="6" r="5.35" fill="none" stroke="#f00" stroke-width="1.05"/><line x1="2" y1="6" x2="10" y2="6" stroke="#f00" stroke-width="1.05"/></svg>
<svg class="a" style="left:843px;top:430px;" width="9" height="9" viewBox="0 0 9 9"><path d="M8.5 1 L1 8.5 M8.5 5 L5 8.5" stroke="#777" stroke-width="1"/></svg>
<div class="a" style="left:609px;top:450px;width:933px;height:38px;border:1px dashed #888"></div>
<div class="a" style="left:610px;top:467px;width:884px;height:1px;background:#4a89f7"></div>
<div class="a t" style="left:620.5px;top:479px;font-size:12px;line-height:12px;color:#4a89f7;font-weight:bold;-webkit-text-stroke:0.12px currentColor">发票信息:</div>
<svg class="a" style="left:1498.5px;top:454px;" width="12" height="12" viewBox="0 0 12 12"><circle cx="6" cy="6" r="5.35" fill="none" stroke="#f00" stroke-width="1.05"/><line x1="2" y1="6" x2="10" y2="6" stroke="#f00" stroke-width="1.05"/></svg>
<svg class="a" style="left:1524px;top:462px;" width="12" height="12" viewBox="0 0 12 12"><circle cx="6" cy="6" r="5.4" fill="none" stroke="#4a89f7" stroke-width="1.1"/><line x1="1.8" y1="6" x2="10.2" y2="6" stroke="#4a89f7" stroke-width="1.1"/></svg>
<div class="a" style="left:609px;top:492px;width:933px;height:38px;border:1px dashed #888"></div>
<svg class="a" style="left:1524px;top:504px;" width="12" height="12" viewBox="0 0 12 12"><circle cx="6" cy="6" r="5.4" fill="none" stroke="#4a89f7" stroke-width="1.1"/><line x1="1.8" y1="6" x2="10.2" y2="6" stroke="#4a89f7" stroke-width="1.1"/></svg>
<div class="a t" style="left:640.5px;top:503px;font-size:12px;line-height:12px;color:#4a89f7;font-weight:bold;-webkit-text-stroke:0.12px currentColor">开票日期:</div>
<div class="inp" style="left:710px;top:496px;width:155px;height:30px"></div>
<svg class="a" style="left:873px;top:496px;" width="12" height="12" viewBox="0 0 12 12"><circle cx="6" cy="6" r="5.35" fill="none" stroke="#f00" stroke-width="1.05"/><line x1="2" y1="6" x2="10" y2="6" stroke="#f00" stroke-width="1.05"/></svg>
<div class="vs" style="left:919px;top:492px;height:38px"></div>
<div class="a t" style="left:950.5px;top:503px;font-size:12px;line-height:12px;color:#4a89f7;font-weight:bold;-webkit-text-stroke:0.12px currentColor">发票代码:</div>
<div class="inp" style="left:1021px;top:496px;width:154px;height:30px"></div>
<div class="a t" style="left:1032px;top:505px;font-size:12px;line-height:12px;color:#888;font-weight:normal;">请输入信息~</div>
<svg class="a" style="left:1184px;top:496px;" width="12" height="12" viewBox="0 0 12 12"><circle cx="6" cy="6" r="5.35" fill="none" stroke="#f00" stroke-width="1.05"/><line x1="2" y1="6" x2="10" y2="6" stroke="#f00" stroke-width="1.05"/></svg>
<div class="vs" style="left:1229px;top:492px;height:38px"></div>
<div class="a t" style="left:1272.5px;top:503px;font-size:12px;line-height:12px;color:#4a89f7;font-weight:bold;-webkit-text-stroke:0.12px currentColor">开票人:</div>
<div class="inp" style="left:1331px;top:496px;width:67px;height:29px"></div>
<div class="a t" style="left:1345.5px;top:504.5px;font-size:12px;line-height:12px;color:#888;font-weight:normal;">请选择</div>
<svg class="a" style="left:1383px;top:506.5px;" width="10" height="8" viewBox="0 0 10 8"><path d="M1.2 1.8 L5 5.8 L8.8 1.8" fill="none" stroke="#777" stroke-width="1.6"/></svg>
<svg class="a" style="left:1404.5px;top:496px;" width="12" height="12" viewBox="0 0 12 12"><circle cx="6" cy="6" r="5.35" fill="none" stroke="#f00" stroke-width="1.05"/><line x1="2" y1="6" x2="10" y2="6" stroke="#f00" stroke-width="1.05"/></svg>
<div class="a" style="left:609px;top:534px;width:933px;height:38px;border:1px dashed #888"></div>
<svg class="a" style="left:1524px;top:546px;" width="12" height="12" viewBox="0 0 12 12"><circle cx="6" cy="6" r="5.4" fill="none" stroke="#4a89f7" stroke-width="1.1"/><line x1="1.8" y1="6" x2="10.2" y2="6" stroke="#4a89f7" stroke-width="1.1"/></svg>
<div class="a t" style="left:640.5px;top:545px;font-size:12px;line-height:12px;color:#4a89f7;font-weight:bold;-webkit-text-stroke:0.12px currentColor">发票类型:</div>
<div class="inp" style="left:710px;top:538.5px;width:66px;height:29px"></div>
<div class="a t" style="left:724.5px;top:547.0px;font-size:12px;line-height:12px;color:#888;font-weight:normal;">请选择</div>
<svg class="a" style="left:762px;top:549.0px;" width="10" height="8" viewBox="0 0 10 8"><path d="M1.2 1.8 L5 5.8 L8.8 1.8" fill="none" stroke="#777" stroke-width="1.6"/></svg>
<svg class="a" style="left:783px;top:538px;" width="12" height="12" viewBox="0 0 12 12"><circle cx="6" cy="6" r="5.35" fill="none" stroke="#f00" stroke-width="1.05"/><line x1="2" y1="6" x2="10" y2="6" stroke="#f00" stroke-width="1.05"/></svg>
<div class="vs" style="left:919px;top:534px;height:38px"></div>
<div class="a t" style="left:931px;top:545px;font-size:12px;line-height:12px;color:#4a89f7;font-weight:bold;-webkit-text-stroke:0.12px currentColor">纳税人识别号:</div>
<div class="inp" style="left:1025px;top:538px;width:154px;height:30px"></div>
<div class="a t" style="left:1036px;top:547px;font-size:12px;line-height:12px;color:#888;font-weight:normal;">请输入信息~</div>
<svg class="a" style="left:1188px;top:538px;" width="12" height="12" viewBox="0 0 12 12"><circle cx="6" cy="6" r="5.35" fill="none" stroke="#f00" stroke-width="1.05"/><line x1="2" y1="6" x2="10" y2="6" stroke="#f00" stroke-width="1.05"/></svg>
<div class="vs" style="left:1229px;top:534px;height:38px"></div>
<div class="a t" style="left:1285.5px;top:545px;font-size:12px;line-height:12px;color:#4a89f7;font-weight:bold;-webkit-text-stroke:0.12px currentColor">签名:</div>
<div class="inp" style="left:1331px;top:538px;width:155px;height:30px"></div>
<div class="a t" style="left:1342px;top:547px;font-size:12px;line-height:12px;color:#666;font-weight:normal;">调用手写板签名</div>
<svg class="a" style="left:1494.5px;top:538px;" width="12" height="12" viewBox="0 0 12 12"><circle cx="6" cy="6" r="5.35" fill="none" stroke="#f00" stroke-width="1.05"/><line x1="2" y1="6" x2="10" y2="6" stroke="#f00" stroke-width="1.05"/></svg>
<div class="a" style="left:611px;top:588px;width:928px;height:110px;border:1px dashed #4a89f7"></div>
<div class="a" style="left:619px;top:586px;width:157px;height:5px;background:#fff"></div>
<div class="a t" style="left:655.5px;top:582.5px;font-size:14px;line-height:14px;color:#4a89f7;font-weight:bold;">商品明细</div>
<svg class="a" style="left:730px;top:583.5px;" width="12" height="12" viewBox="0 0 12 12"><circle cx="6" cy="6" r="5.35" fill="none" stroke="#f00" stroke-width="1.05"/><line x1="2" y1="6" x2="10" y2="6" stroke="#f00" stroke-width="1.05"/></svg>
<div class="a" style="left:621px;top:605px;width:908px;height:41px;background:#f2f2f2;border:1px solid #dddddd;border-bottom:none"></div>
<div class="a" style="left:848px;top:605px;width:1px;height:41px;background:#dddddd"></div>
<div class="a" style="left:1075px;top:605px;width:1px;height:41px;background:#dddddd"></div>
<div class="a" style="left:1301px;top:605px;width:1px;height:41px;background:#dddddd"></div>
<div class="a t" style="left:621px;top:620px;width:227px;text-align:center;font-size:12px;line-height:12px;color:#666;font-weight:bold;-webkit-text-stroke:0.25px currentColor">商品名称</div>
<div class="a t" style="left:848px;top:620px;width:227px;text-align:center;font-size:12px;line-height:12px;color:#666;font-weight:bold;-webkit-text-stroke:0.25px currentColor">商品数量</div>
<div class="a t" style="left:1075px;top:620px;width:227px;text-align:center;font-size:12px;line-height:12px;color:#666;font-weight:bold;-webkit-text-stroke:0.25px currentColor">商品金额</div>
<div class="a t" style="left:1302px;top:620px;width:227px;text-align:center;font-size:12px;line-height:12px;color:#666;font-weight:bold;-webkit-text-stroke:0.25px currentColor">商品合计</div>
<div class="a" style="left:621px;top:646px;width:908px;height:43px;border:1px dashed #888"></div>
<div class="vs" style="left:847px;top:646px;height:43px"></div>
<div class="vs" style="left:1074px;top:646px;height:43px"></div>
<div class="vs" style="left:1300px;top:646px;height:43px"></div>
<div class="inp" style="left:626.5px;top:654px;width:154px;height:30px"></div>
<div class="a t" style="left:637.5px;top:663px;font-size:12px;line-height:12px;color:#888;font-weight:normal;">请输入信息~</div>
<div class="inp" style="left:853px;top:654px;width:155px;height:30px"></div>
<div class="inp" style="left:1080.5px;top:654px;width:154px;height:30px"></div>
<div class="inp" style="left:1306px;top:654px;width:155px;height:30px"></div>
<div class="a" style="left:1543px;top:112px;width:361px;height:727px;border-left:1px solid #e6e6e6;border-bottom:1px solid #e6e6e6"></div>
<div class="a t" style="left:1549px;top:127px;font-size:12px;line-height:12px;color:#555;font-weight:normal;">字段设置</div>
<div class="a" style="left:1549px;top:147px;width:348px;height:1px;background:#e6e6e6"></div>
<div class="a t" style="left:1560px;top:163px;width:74px;text-align:right;font-size:12px;line-height:12px;color:#4a89f7;font-weight:bold;-webkit-text-stroke:0.25px currentColor">唯一标识</div>
<div class="inp" style="left:1644px;top:157px;width:153px;height:29px;overflow:hidden"></div>
<div class="a t" style="left:1645px;top:164px;width:151px;overflow:hidden;font-size:12px;line-height:16px;color:#222;padding-left:10px">sign_20251027163553834</div>
<div class="a t" style="left:1803px;top:162px;font-size:14.5px;line-height:14.5px;color:#f00;font-weight:normal;">S</div>
<div class="a t" style="left:1560px;top:203px;width:74px;text-align:right;font-size:12px;line-height:12px;color:#4a89f7;font-weight:bold;-webkit-text-stroke:0.25px currentColor">字段标题</div>
<div class="inp" style="left:1644px;top:195px;width:155px;height:29px;overflow:hidden"></div>
<div class="a t" style="left:1645px;top:202px;width:153px;overflow:hidden;font-size:12px;line-height:16px;color:#222;padding-left:10px">签名</div>
<div class="a t" style="left:1560px;top:241px;width:74px;text-align:right;font-size:12px;line-height:12px;color:#4a89f7;font-weight:bold;-webkit-text-stroke:0.25px currentColor">字段名称</div>
<div class="inp" style="left:1644px;top:233px;width:155px;height:29px;overflow:hidden"></div>
<div class="a t" style="left:1645px;top:240px;width:153px;overflow:hidden;font-size:12px;line-height:16px;color:#222;padding-left:10px">qianming</div>
<div class="a t" style="left:1560px;top:279px;width:74px;text-align:right;font-size:12px;line-height:12px;color:#4a89f7;font-weight:bold;-webkit-text-stroke:0.25px currentColor">字段类型</div>
<div class="inp" style="left:1644px;top:271px;width:69px;height:29px;border-color:#d5d5d5"></div>
<div class="a t" style="left:1649px;top:280px;font-size:12px;line-height:12px;color:#222;font-weight:normal;">longtext</div>
<svg class="a" style="left:1699px;top:281px;" width="10" height="8" viewBox="0 0 10 8"><path d="M1.2 1.8 L5 5.8 L8.8 1.8" fill="none" stroke="#111" stroke-width="1.8"/></svg>
<div class="a t" style="left:1560px;top:317px;width:74px;text-align:right;font-size:12px;line-height:12px;color:#4a89f7;font-weight:bold;-webkit-text-stroke:0.25px currentColor">字段长度</div>
<div class="inp" style="left:1644px;top:308.5px;width:80px;height:29px;overflow:hidden"></div>
<div class="a t" style="left:1645px;top:315.5px;width:78px;overflow:hidden;font-size:12px;line-height:16px;color:#222;padding-left:10px">0</div>
<div class="a t" style="left:1560px;top:355px;width:74px;text-align:right;font-size:12px;line-height:12px;color:#4a89f7;font-weight:bold;-webkit-text-stroke:0.25px currentColor">组件宽度</div>
<div class="inp" style="left:1644px;top:346.5px;width:80px;height:29px;overflow:hidden"></div>
<div class="a t" style="left:1645px;top:353.5px;width:78px;overflow:hidden;font-size:12px;line-height:16px;color:#222;padding-left:10px">120</div>
<div class="a t" style="left:1560px;top:392px;width:74px;text-align:right;font-size:12px;line-height:12px;color:#4a89f7;font-weight:bold;-webkit-text-stroke:0.25px currentColor">字段属性</div>
<div class="inp" style="left:1644px;top:384.5px;width:69px;height:29px;border-color:#d5d5d5"></div>
<div class="a t" style="left:1649px;top:393.5px;font-size:12px;line-height:12px;color:#222;font-weight:normal;">非只读</div>
<svg class="a" style="left:1699px;top:394.5px;" width="10" height="8" viewBox="0 0 10 8"><path d="M1.2 1.8 L5 5.8 L8.8 1.8" fill="none" stroke="#111" stroke-width="1.8"/></svg>
<div class="inp" style="left:1714.5px;top:384.5px;width:69px;height:29px;border-color:#d5d5d5"></div>
<div class="a t" style="left:1719.5px;top:393.5px;font-size:12px;line-height:12px;color:#222;font-weight:normal;">非必填</div>
<svg class="a" style="left:1769.5px;top:394.5px;" width="10" height="8" viewBox="0 0 10 8"><path d="M1.2 1.8 L5 5.8 L8.8 1.8" fill="none" stroke="#111" stroke-width="1.8"/></svg>
<div class="inp" style="left:1784.5px;top:384.5px;width:69px;height:29px;border-color:#d5d5d5"></div>
<div class="a t" style="left:1789.5px;top:393.5px;font-size:12px;line-height:12px;color:#222;font-weight:normal;">不记忆</div>
<svg class="a" style="left:1839.5px;top:394.5px;" width="10" height="8" viewBox="0 0 10 8"><path d="M1.2 1.8 L5 5.8 L8.8 1.8" fill="none" stroke="#111" stroke-width="1.8"/></svg>
<div class="inp" style="left:1644px;top:418px;width:69px;height:29px;border-color:#d5d5d5"></div>
<div class="a t" style="left:1649px;top:427px;font-size:12px;line-height:12px;color:#222;font-weight:normal;">非唯一</div>
<svg class="a" style="left:1699px;top:428px;" width="10" height="8" viewBox="0 0 10 8"><path d="M1.2 1.8 L5 5.8 L8.8 1.8" fill="none" stroke="#111" stroke-width="1.8"/></svg>
<div class="inp" style="left:1714.5px;top:418px;width:69px;height:29px;border-color:#d5d5d5"></div>
<div class="a t" style="left:1719.5px;top:427px;font-size:12px;line-height:12px;color:#222;font-weight:normal;">字段显示</div>
<svg class="a" style="left:1769.5px;top:428px;" width="10" height="8" viewBox="0 0 10 8"><path d="M1.2 1.8 L5 5.8 L8.8 1.8" fill="none" stroke="#111" stroke-width="1.8"/></svg>
<div class="inp" style="left:1784.5px;top:418px;width:71px;height:29px;border-color:#d5d5d5"></div>
<div class="a t" style="left:1789.5px;top:427px;font-size:12px;line-height:12px;color:#222;font-weight:normal;">不隐藏</div>
<svg class="a" style="left:1841.5px;top:428px;" width="10" height="8" viewBox="0 0 10 8"><path d="M1.2 1.8 L5 5.8 L8.8 1.8" fill="none" stroke="#111" stroke-width="1.8"/></svg>
<div class="a t" style="left:1560px;top:473px;width:74px;text-align:right;font-size:12px;line-height:12px;color:#4a89f7;font-weight:bold;-webkit-text-stroke:0.25px currentColor">帮助信息</div>
<div class="inp" style="left:1644px;top:465.5px;width:154px;height:29px;overflow:hidden"></div>
<div class="a t" style="left:1560px;top:511px;width:74px;text-align:right;font-size:12px;line-height:12px;color:#4a89f7;font-weight:bold;-webkit-text-stroke:0.25px currentColor">默认内容</div>
<div class="inp" style="left:1644px;top:503.5px;width:157px;height:29px;overflow:hidden"></div>
<div class="a t" style="left:1807.5px;top:510px;font-size:14px;line-height:14px;color:#f00;font-weight:normal;">配</div>
<div class="a t" style="left:1560px;top:549px;width:74px;text-align:right;font-size:12px;line-height:12px;color:#4a89f7;font-weight:bold;-webkit-text-stroke:0.25px currentColor">规则引擎</div>
<div class="inp" style="left:1644px;top:541.5px;width:157px;height:29px;overflow:hidden"></div>
<div class="a t" style="left:1807.5px;top:548px;font-size:14px;line-height:14px;color:#f00;font-weight:normal;">配</div>
<div class="a t" style="left:1560px;top:587px;width:74px;text-align:right;font-size:12px;line-height:12px;color:#4a89f7;font-weight:bold;-webkit-text-stroke:0.25px currentColor">Ai提示</div>
<div class="inp" style="left:1644px;top:579.5px;width:154px;height:29px;overflow:hidden"></div>
<div class="a t" style="left:1645px;top:586.5px;width:152px;overflow:hidden;font-size:12px;line-height:16px;color:#777;padding-left:10px">您可以设置Ai提示帮助，将文本</div>
<div class="a t" style="left:1563px;top:615px;width:48px;height:26px;background:#4a89fc;border-radius:3px;color:#fff;font-size:13px;line-height:13px;padding-top:6.5px;text-align:center">保存</div>
<div class="a" style="left:1797px;top:851px;width:30px;height:30px;background:#6db33f;border-radius:3px 0 0 3px"></div>
<svg class="a" style="left:1797px;top:851px;" width="30" height="30" viewBox="0 0 30 30"><path d="M0 0 L15 13 L30 0 Z" fill="#8bc766" opacity=".55"/><path d="M0 30 L15 17 L30 30 Z" fill="#5a9c30" opacity=".5"/><g fill="#fff"><path d="M2.5 23 C4 16 14 16 17 4.5 C19 11 14 19 5 24 Z"/><path d="M7 28.5 C9 21.5 19 21 22 10 C24 17 19 24.5 10 29.5 Z"/><path d="M13 30 C15 26 22 25 25 17.5 C27 23 23 28 17 30 Z"/></g></svg>
<div class="a" style="left:1827px;top:851px;width:77px;height:30px;background:#222"></div>
<div class="a t" style="left:1832.5px;top:859px;font-size:14px;line-height:14px;color:#fff;font-weight:normal;">0.067878s</div>
<div class="a" style="left:1906px;top:853px;width:3px;height:28px;background:#222"></div>
<div class="a" style="left:1813px;top:882px;width:30px;height:30px;background:#6db33f;border-radius:3px 0 0 3px"></div>
<svg class="a" style="left:1813px;top:882px;" width="30" height="30" viewBox="0 0 30 30"><path d="M0 0 L15 13 L30 0 Z" fill="#8bc766" opacity=".55"/><path d="M0 30 L15 17 L30 30 Z" fill="#5a9c30" opacity=".5"/><g fill="#fff"><path d="M2.5 23 C4 16 14 16 17 4.5 C19 11 14 19 5 24 Z"/><path d="M7 28.5 C9 21.5 19 21 22 10 C24 17 19 24.5 10 29.5 Z"/><path d="M13 30 C15 26 22 25 25 17.5 C27 23 23 28 17 30 Z"/></g></svg>
<div class="a" style="left:1843px;top:882px;width:77px;height:30px;background:#222"></div>
<div class="a t" style="left:1848.5px;top:890px;font-size:14px;line-height:14px;color:#fff;font-weight:normal;">0.297895s</div>
<div class="a t" style="left:1851px;top:895px;font-size:16px;line-height:16px;color:#1590c0;font-weight:normal;font-style:italic;opacity:.8">cojz8.com</div>
<div class="a" style="left:0;top:0;width:1920px;height:911px;pointer-events:none;overflow:hidden"><div class="a t" style="left:41.5px;top:52.5px;font-size:16.5px;line-height:16px;color:rgba(150,150,150,.15);transform-origin:0 13.5px;transform:rotate(-21.5deg)">Id:12026-04-23gadmin</div><div class="a t" style="left:373.0px;top:52.5px;font-size:16.5px;line-height:16px;color:rgba(150,150,150,.15);transform-origin:0 13.5px;transform:rotate(-21.5deg)">Id:12026-04-23gadmin</div><div class="a t" style="left:704.5px;top:52.5px;font-size:16.5px;line-height:16px;color:rgba(150,150,150,.15);transform-origin:0 13.5px;transform:rotate(-21.5deg)">Id:12026-04-23gadmin</div><div class="a t" style="left:1036.0px;top:52.5px;font-size:16.5px;line-height:16px;color:rgba(150,150,150,.15);transform-origin:0 13.5px;transform:rotate(-21.5deg)">Id:12026-04-23gadmin</div><div class="a t" style="left:1367.5px;top:52.5px;font-size:16.5px;line-height:16px;color:rgba(150,150,150,.15);transform-origin:0 13.5px;transform:rotate(-21.5deg)">Id:12026-04-23gadmin</div><div class="a t" style="left:1699.0px;top:52.5px;font-size:16.5px;line-height:16px;color:rgba(150,150,150,.15);transform-origin:0 13.5px;transform:rotate(-21.5deg)">Id:12026-04-23gadmin</div><div class="a t" style="left:41.5px;top:183.5px;font-size:16.5px;line-height:16px;color:rgba(150,150,150,.15);transform-origin:0 13.5px;transform:rotate(-21.5deg)">Id:12026-04-23gadmin</div><div class="a t" style="left:373.0px;top:183.5px;font-size:16.5px;line-height:16px;color:rgba(150,150,150,.15);transform-origin:0 13.5px;transform:rotate(-21.5deg)">Id:12026-04-23gadmin</div><div class="a t" style="left:704.5px;top:183.5px;font-size:16.5px;line-height:16px;color:rgba(150,150,150,.15);transform-origin:0 13.5px;transform:rotate(-21.5deg)">Id:12026-04-23gadmin</div><div class="a t" style="left:1036.0px;top:183.5px;font-size:16.5px;line-height:16px;color:rgba(150,150,150,.15);transform-origin:0 13.5px;transform:rotate(-21.5deg)">Id:12026-04-23gadmin</div><div class="a t" style="left:1367.5px;top:183.5px;font-size:16.5px;line-height:16px;color:rgba(150,150,150,.15);transform-origin:0 13.5px;transform:rotate(-21.5deg)">Id:12026-04-23gadmin</div><div class="a t" style="left:1699.0px;top:183.5px;font-size:16.5px;line-height:16px;color:rgba(150,150,150,.15);transform-origin:0 13.5px;transform:rotate(-21.5deg)">Id:12026-04-23gadmin</div><div class="a t" style="left:41.5px;top:314.5px;font-size:16.5px;line-height:16px;color:rgba(150,150,150,.15);transform-origin:0 13.5px;transform:rotate(-21.5deg)">Id:12026-04-23gadmin</div><div class="a t" style="left:373.0px;top:314.5px;font-size:16.5px;line-height:16px;color:rgba(150,150,150,.15);transform-origin:0 13.5px;transform:rotate(-21.5deg)">Id:12026-04-23gadmin</div><div class="a t" style="left:704.5px;top:314.5px;font-size:16.5px;line-height:16px;color:rgba(150,150,150,.15);transform-origin:0 13.5px;transform:rotate(-21.5deg)">Id:12026-04-23gadmin</div><div class="a t" style="left:1036.0px;top:314.5px;font-size:16.5px;line-height:16px;color:rgba(150,150,150,.15);transform-origin:0 13.5px;transform:rotate(-21.5deg)">Id:12026-04-23gadmin</div><div class="a t" style="left:1367.5px;top:314.5px;font-size:16.5px;line-height:16px;color:rgba(150,150,150,.15);transform-origin:0 13.5px;transform:rotate(-21.5deg)">Id:12026-04-23gadmin</div><div class="a t" style="left:1699.0px;top:314.5px;font-size:16.5px;line-height:16px;color:rgba(150,150,150,.15);transform-origin:0 13.5px;transform:rotate(-21.5deg)">Id:12026-04-23gadmin</div><div class="a t" style="left:41.5px;top:445.5px;font-size:16.5px;line-height:16px;color:rgba(150,150,150,.15);transform-origin:0 13.5px;transform:rotate(-21.5deg)">Id:12026-04-23gadmin</div><div class="a t" style="left:373.0px;top:445.5px;font-size:16.5px;line-height:16px;color:rgba(150,150,150,.15);transform-origin:0 13.5px;transform:rotate(-21.5deg)">Id:12026-04-23gadmin</div><div class="a t" style="left:704.5px;top:445.5px;font-size:16.5px;line-height:16px;color:rgba(150,150,150,.15);transform-origin:0 13.5px;transform:rotate(-21.5deg)">Id:12026-04-23gadmin</div><div class="a t" style="left:1036.0px;top:445.5px;font-size:16.5px;line-height:16px;color:rgba(150,150,150,.15);transform-origin:0 13.5px;transform:rotate(-21.5deg)">Id:12026-04-23gadmin</div><div class="a t" style="left:1367.5px;top:445.5px;font-size:16.5px;line-height:16px;color:rgba(150,150,150,.15);transform-origin:0 13.5px;transform:rotate(-21.5deg)">Id:12026-04-23gadmin</div><div class="a t" style="left:1699.0px;top:445.5px;font-size:16.5px;line-height:16px;color:rgba(150,150,150,.15);transform-origin:0 13.5px;transform:rotate(-21.5deg)">Id:12026-04-23gadmin</div><div class="a t" style="left:41.5px;top:576.5px;font-size:16.5px;line-height:16px;color:rgba(150,150,150,.15);transform-origin:0 13.5px;transform:rotate(-21.5deg)">Id:12026-04-23gadmin</div><div class="a t" style="left:373.0px;top:576.5px;font-size:16.5px;line-height:16px;color:rgba(150,150,150,.15);transform-origin:0 13.5px;transform:rotate(-21.5deg)">Id:12026-04-23gadmin</div><div class="a t" style="left:704.5px;top:576.5px;font-size:16.5px;line-height:16px;color:rgba(150,150,150,.15);transform-origin:0 13.5px;transform:rotate(-21.5deg)">Id:12026-04-23gadmin</div><div class="a t" style="left:1036.0px;top:576.5px;font-size:16.5px;line-height:16px;color:rgba(150,150,150,.15);transform-origin:0 13.5px;transform:rotate(-21.5deg)">Id:12026-04-23gadmin</div><div class="a t" style="left:1367.5px;top:576.5px;font-size:16.5px;line-height:16px;color:rgba(150,150,150,.15);transform-origin:0 13.5px;transform:rotate(-21.5deg)">Id:12026-04-23gadmin</div><div class="a t" style="left:1699.0px;top:576.5px;font-size:16.5px;line-height:16px;color:rgba(150,150,150,.15);transform-origin:0 13.5px;transform:rotate(-21.5deg)">Id:12026-04-23gadmin</div></div>
</body></html>
